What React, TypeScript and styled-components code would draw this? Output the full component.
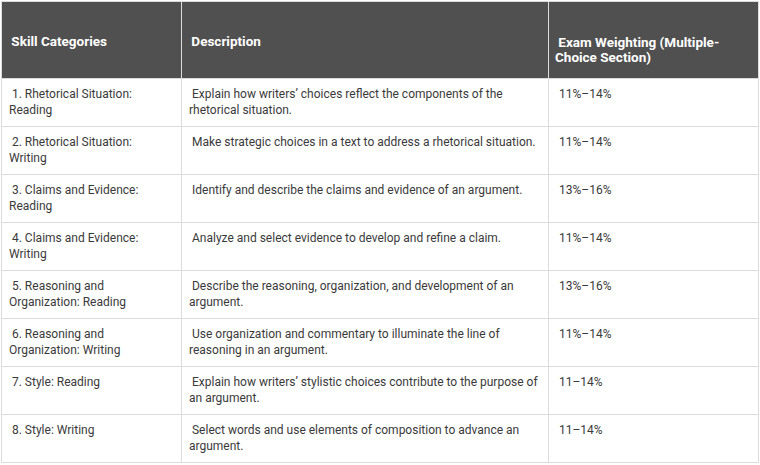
import React from "react";
import styled, { createGlobalStyle } from "styled-components";

const Global = createGlobalStyle`
  html, body { margin: 0; padding: 0; background: #fff; }
  body { font-family: Roboto, "Noto Sans", Arial, sans-serif; }
`;

const Wrap = styled.div`
  padding: 1px;
`;

const Table = styled.table`
  border-collapse: collapse;
  width: 757px;
  table-layout: fixed;
  font-family: Roboto, Arial, sans-serif;
  font-size: 12px;
  line-height: 16px;
  color: #3a3a3a;
`;

const Head = styled.th<{ $w: number; $pt?: number; $pr?: number }>`
  width: ${(p) => p.$w}px;
  height: 77px;
  background: #505050;
  color: #fff;
  font-size: 13.5px;
  font-weight: 700;
  line-height: 15px;
  text-align: left;
  vertical-align: middle;
  padding: ${(p) => p.$pt ?? 2}px ${(p) => p.$pr ?? 8}px 0 6px;
  border: 1px solid #dcdcdc;
  box-sizing: border-box;
`;

const Cell = styled.td<{ $pr?: number }>`
  height: 48px;
  padding: 7px ${(p) => p.$pr ?? 8}px 0 7px;
  vertical-align: top;
  border: 1px solid #dcdcdc;
  box-sizing: border-box;
`;

const rows = [
  ["1. Rhetorical Situation: Reading", "Explain how writers’ choices reflect the components of the rhetorical situation.", "11%–14%"],
  ["2. Rhetorical Situation: Writing", "Make strategic choices in a text to address a rhetorical situation.", "11%–14%"],
  ["3. Claims and Evidence: Reading", "Identify and describe the claims and evidence of an argument.", "13%–16%"],
  ["4. Claims and Evidence: Writing", "Analyze and select evidence to develop and refine a claim.", "11%–14%"],
  ["5. Reasoning and Organization: Reading", "Describe the reasoning, organization, and development of an argument.", "13%–16%"],
  ["6. Reasoning and Organization: Writing", "Use organization and commentary to illuminate the line of reasoning in an argument.", "11%–14%"],
  ["7. Style: Reading", "Explain how writers’ stylistic choices contribute to the purpose of an argument.", "11–14%"],
  ["8. Style: Writing", "Select words and use elements of composition to advance an argument.", "11–14%"],
];

export default function App() {
  return (
    <Wrap>
      <Global />
      <Table>
        <thead>
          <tr>
            <Head $w={180}>&nbsp;Skill Categories</Head>
            <Head $w={367}>&nbsp;Description</Head>
            <Head $w={210} $pt={20} $pr={10}>&nbsp;Exam Weighting (Multiple-Choice Section)</Head>
          </tr>
        </thead>
        <tbody>
          {rows.map((r, i) => (
            <tr key={i}>
              <Cell $pr={16}>&nbsp;{r[0]}</Cell>
              <Cell $pr={6}>&nbsp;{r[1]}</Cell>
              <Cell>&nbsp;{r[2]}</Cell>
            </tr>
          ))}
        </tbody>
      </Table>
    </Wrap>
  );
}
